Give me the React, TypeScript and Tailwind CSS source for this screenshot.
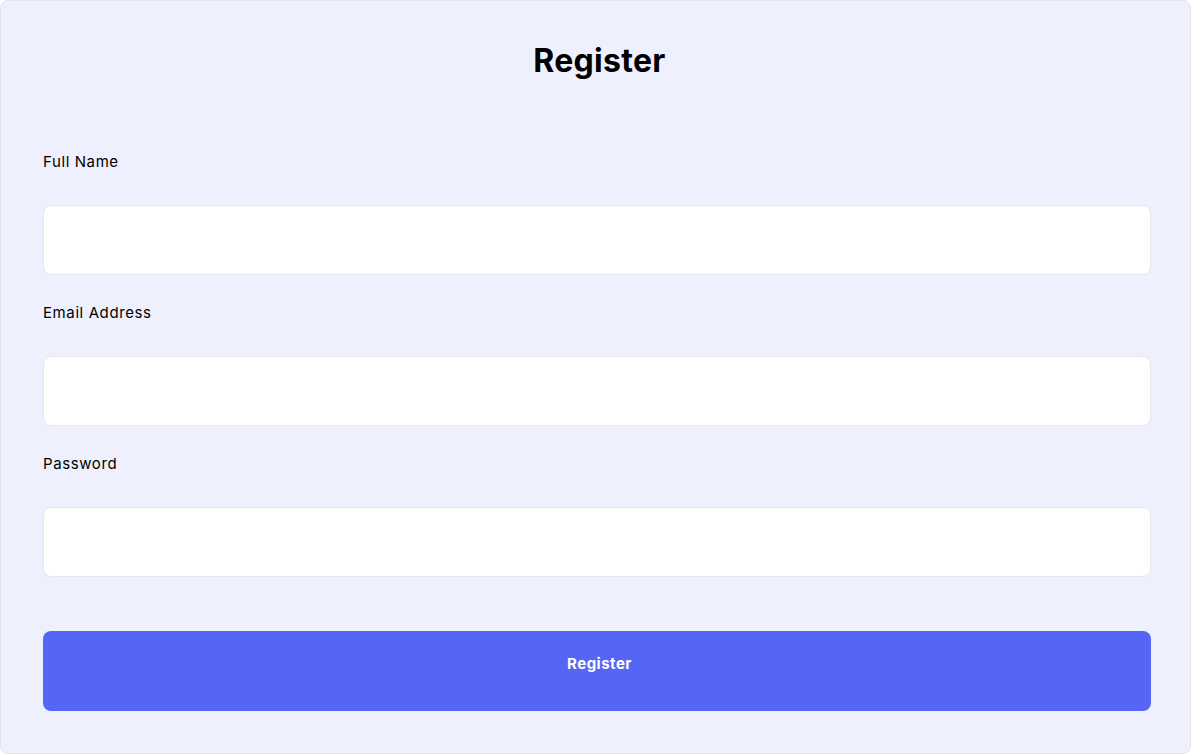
const fields = [
  { label: 'Full Name', type: 'text' },
  { label: 'Email Address', type: 'email' },
  { label: 'Password', type: 'password' },
]

const App = () => {
  return (
    <div className="min-h-[754px] bg-white font-['Inter',sans-serif] text-black">
      <form
        className="h-[754px] bg-[#eef0fd] border border-[#e4e5ea] rounded-lg pl-[42px] pr-[39px] pt-[36px] pb-[41px] flex flex-col"
        onSubmit={(e) => e.preventDefault()}
      >
        <h1 className="pl-[5px] text-center text-[32px] leading-[48px] font-bold tracking-[0.3px]">Register</h1>

        <div className="mt-[66px] flex flex-col">
          {fields.map((field) => (
            <div key={field.label} className="flex flex-col mb-[27px]">
              <label className="text-[15px] leading-[22px] mb-[32px] tracking-[0.6px]">{field.label}</label>
              <input
                type={field.type}
                className="h-[70px] shrink-0 bg-white border border-[#e6e7ee] rounded-lg px-4 outline-none"
              />
            </div>
          ))}
        </div>

        <button
          type="submit"
          className="mt-[27px] h-[80px] shrink-0 rounded-lg bg-[#5566f6] text-white text-[15px] leading-[22px] font-bold tracking-[0.5px] pl-[5px] pt-[22px] flex justify-center items-start"
        >
          Register
        </button>
      </form>
    </div>
  )
}

export default App
